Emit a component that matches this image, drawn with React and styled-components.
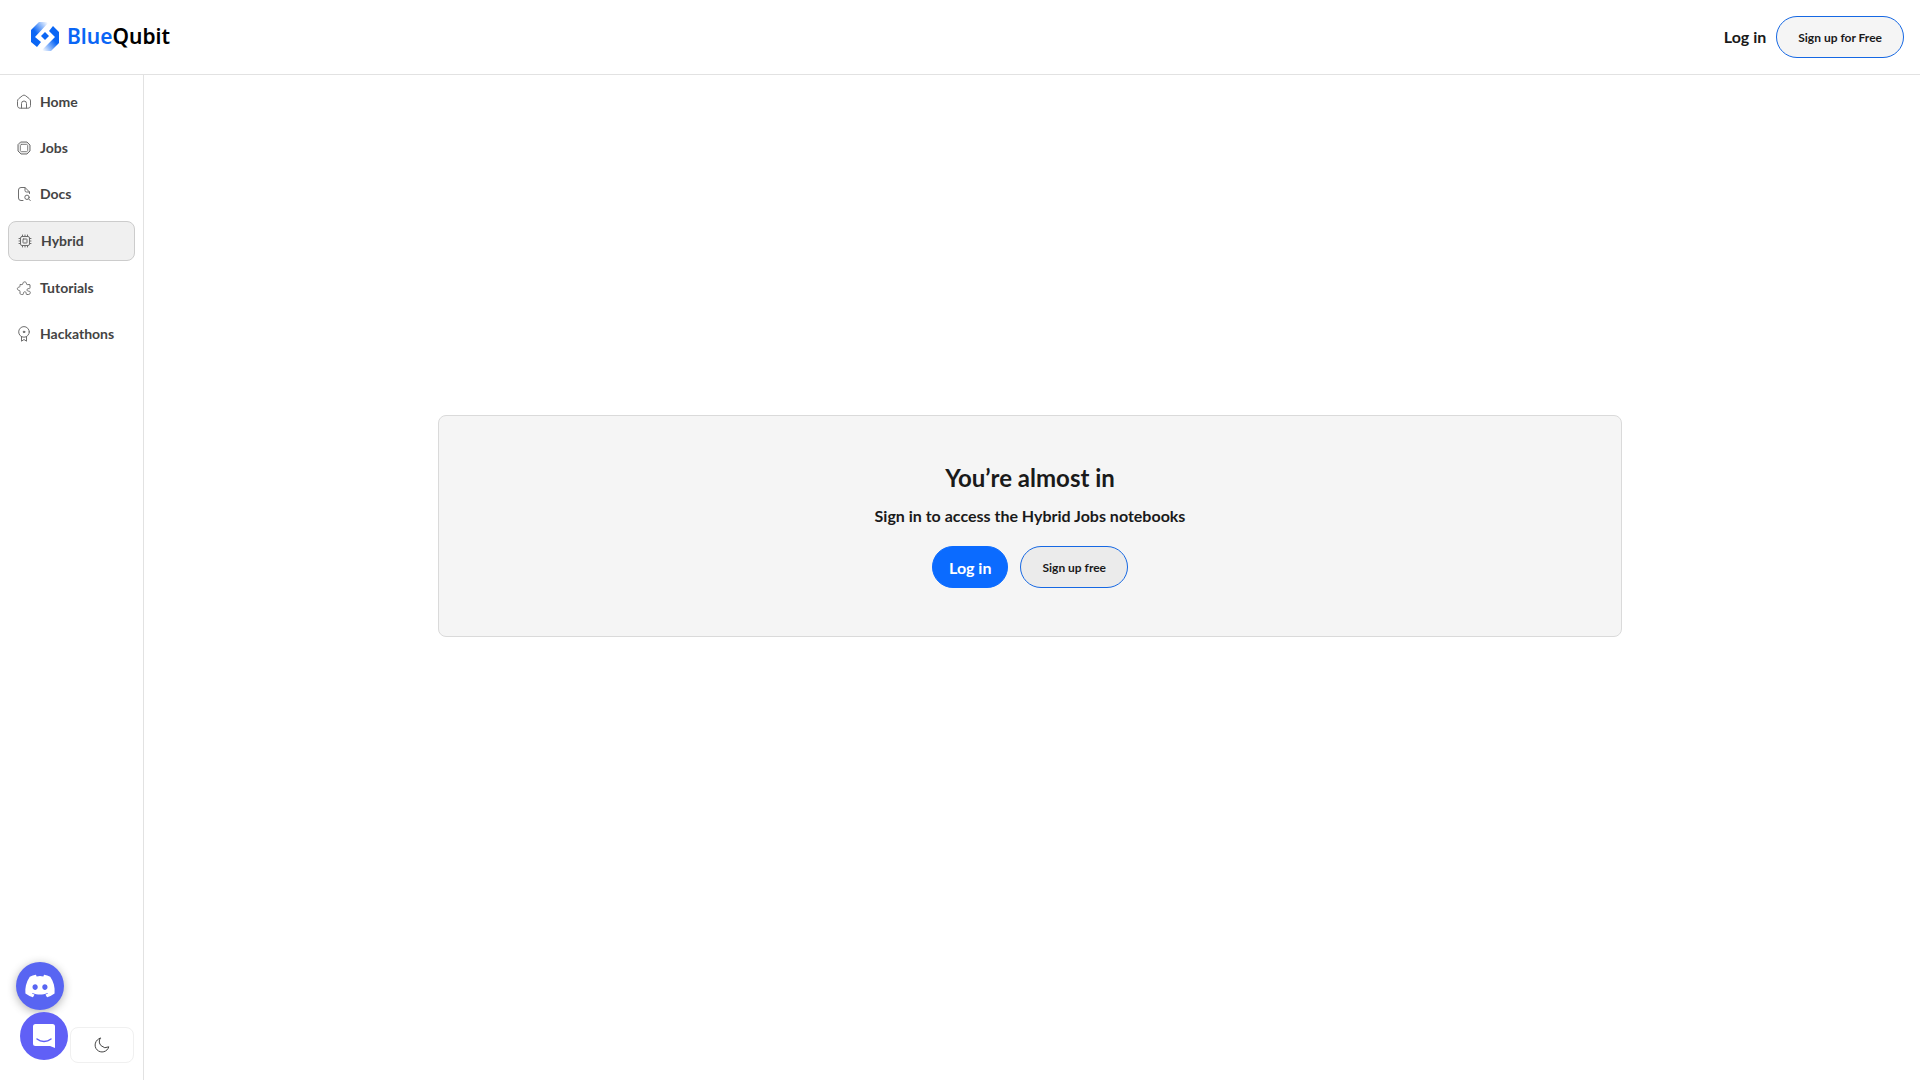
import React, { useState } from "react";
import styled, { createGlobalStyle, css } from "styled-components";
import { FaDiscord } from "react-icons/fa";

const GlobalStyle = createGlobalStyle`
  * {
    box-sizing: border-box;
  }

  body {
    margin: 0;
    background: #ffffff;
    color: #1a1a1a;
    font-family: Lato, "Liberation Sans", sans-serif;
    font-size: 16px;
  }
`;

const Page = styled.div`
  display: flex;
  flex-direction: column;
  min-height: 100vh;
`;

const Header = styled.header`
  display: flex;
  align-items: center;
  justify-content: space-between;
  padding: 16px;
  border-bottom: 1px solid #e2e2e2;
`;

const Brand = styled.a`
  display: flex;
  align-items: center;
  gap: 7px;
  margin-left: 14px;
  color: #000000;
  font-family: "Noto Sans", sans-serif;
  font-size: 21px;
  font-weight: 600;
  line-height: 28px;
  text-decoration: none;
`;

const BrandName = styled.span`
  padding-bottom: 2px;
`;

const BrandAccent = styled.span`
  color: #0a66f5;
`;

const Actions = styled.div`
  display: flex;
  align-items: center;
  gap: ${(props) => props.$gap};
`;

const TextLink = styled.a`
  color: #1a1a1a;
  font-weight: 700;
  line-height: 24px;
  text-decoration: none;
`;

const PillButton = styled.button`
  height: 42px;
  padding: 0 21px;
  border: 1px solid #1668e3;
  border-radius: 21px;
  background: ${(props) => props.$background};
  color: #1a1a1a;
  font-family: inherit;
  font-size: 12px;
  font-weight: 700;
  cursor: pointer;

  ${(props) =>
    props.$primary &&
    css`
      padding: 0 16px;
      border-color: #0b6bff;
      background: #0b6bff;
      color: #ffffff;
      font-size: 16px;
    `}
`;

const Body = styled.div`
  display: flex;
  flex: 1;
`;

const Sidebar = styled.aside`
  display: flex;
  flex-direction: column;
  justify-content: space-between;
  width: 144px;
  padding: 8px;
  border-right: 1px solid #e2e2e2;
`;

const Nav = styled.nav`
  display: flex;
  flex-direction: column;
  gap: 8px;
`;

const NavItem = styled.a`
  display: flex;
  align-items: center;
  gap: 8px;
  padding: 9px 8px;
  border-radius: 8px;
  color: #444444;
  font-size: 14px;
  font-weight: 700;
  line-height: 20px;
  text-decoration: none;

  ${(props) =>
    props.$active &&
    css`
      border: 1px solid #cccccc;
      background: #f0f0f0;
    `}
`;

const Icon = styled.svg`
  width: 16px;
  height: 16px;
  fill: none;
  stroke: ${(props) => props.$color || "#6e6e6e"};
  stroke-width: 1;
  stroke-linecap: round;
  stroke-linejoin: round;
`;

const ThemeButton = styled.button`
  display: flex;
  align-items: center;
  justify-content: center;
  align-self: flex-end;
  width: 64px;
  height: 36px;
  margin: 0 1px 9px 0;
  padding: 0;
  border: 1px solid #f0f0f0;
  border-radius: 8px;
  background: #ffffff;
  cursor: pointer;
`;

const Main = styled.main`
  display: flex;
  flex: 1;
  align-items: center;
  justify-content: center;
  padding: 0 4px 103px 0;
`;

const Card = styled.section`
  display: flex;
  flex-direction: column;
  align-items: center;
  width: 66.8%;
  padding: 48px 24px;
  border: 1px solid #dadada;
  border-radius: 8px;
  background: #f5f5f5;
`;

const Title = styled.h1`
  margin: 0 0 12px;
  font-size: 24px;
  font-weight: 700;
  line-height: 28px;
`;

const Message = styled.p`
  margin: 0 0 18px;
  font-weight: 700;
  line-height: 24px;
`;

const FloatingButtons = styled.div`
  position: fixed;
  bottom: 20px;
  left: 16px;
  display: flex;
  flex-direction: column;
  gap: 2px;
`;

const RoundButton = styled.button`
  display: flex;
  align-items: center;
  justify-content: center;
  width: 48px;
  height: 48px;
  padding: 0;
  border: none;
  border-radius: 50%;
  background: #5865f2;
  box-shadow: 0 2px 10px rgba(0, 0, 0, 0.3);
  color: #ffffff;
  cursor: pointer;
`;

const ChatButton = styled(RoundButton)`
  margin-left: 4px;
  background: #6060f6;
  box-shadow: none;
`;

const navItems = [
  {
    label: "Home",
    icon: (
      <>
        <path d="M1.5 7c0-1 .4-1.7 1.2-2.3l3.6-2.9c1-.8 2.400-.8 3.400 0l3.600 2.900c.8.6 1.200 1.300 1.200 2.300v4.500c0 1.700-1 2.700-2.700 2.700H4.200c-1.700 0-2.700-1-2.700-2.700z" />
        <path d="M5.500 14V9.500a2.500 2.500 0 0 1 5 0V14" />
      </>
    ),
  },
  {
    label: "Jobs",
    icon: (
      <>
        <path
          d="M5 2h6l3 3v6l-3 3H5l-3-3V5z"
          fill="#e4e4e4"
        />
        <rect
          x="4.500"
          y="4.500"
          width="7"
          height="7"
          rx="1"
          fill="#ffffff"
          strokeOpacity="0.700"
        />
      </>
    ),
  },
  {
    label: "Docs",
    icon: (
      <>
        <path d="M7 14.500H5A2.500 2.500 0 0 1 2.500 12V4A2.500 2.500 0 0 1 5 1.500h4L13.500 6v1.500M9 1.500v3A1.500 1.500 0 0 0 10.500 6h3" />
        <circle cx="11" cy="11.300" r="2.200" />
        <path d="M12.700 13l1.600 1.600" />
      </>
    ),
  },
  {
    label: "Hybrid",
    icon: (
      <>
        <rect x="3.500" y="3.500" width="9" height="9" rx="1.500" />
        <rect x="6" y="6" width="4" height="4" rx="0.500" />
        <path d="M5.500 3.500V2M8 3.500V2M10.500 3.500V2M5.500 14v-1.500M8 14v-1.500M10.500 14v-1.500M3.500 5.500H2M3.500 8H2M3.500 10.500H2M14 5.500h-1.500M14 8h-1.500M14 10.500h-1.500" />
      </>
    ),
  },
  {
    label: "Tutorials",
    icon: (
      <path d="M4.500 4.500c1 .2 2.300.3 2.300-.7 0-2.600 3.700-2.600 3.700 0 0 1 1.200.9 2.500.7l1 .3v3c-.2.800-.5 1-1.200.8-2-.5-2.500 2.500-.5 2.500 1.200 0 2 .5 2 1.400 0 1-.6 2-2 2h-1.500c-.5 0-.7-.4-.6-1 .2-2.300-3-2.300-2.800 0 .1.600-.1 1-.6 1H5.500c-1 0-1.500-.6-1.500-1.500v-1.500c0-.8-.3-1-.9-1.100-2.300-.3-2.300-3 0-3.300.6-.1.900-.3.900-1z" />
    ),
  },
  {
    label: "Hackathons",
    icon: (
      <>
        <circle cx="8" cy="5.900" r="5.300" />
        <circle cx="8" cy="5.900" r="0.800" fill="#6e6e6e" />
        <path d="M5.500 10.800v4.400L8 13.500l2.500 1.700v-4.400" />
      </>
    ),
  },
];

const Logo = () => (
  <svg width="30" height="32" viewBox="0 0 30 32" aria-hidden="true">
    <defs>
      <linearGradient id="logoLeft" x1="0" y1="1" x2="0.900" y2="0">
        <stop offset="0.450" stopColor="#0a66f5" />
        <stop offset="1" stopColor="#0a66f5" stopOpacity="0" />
      </linearGradient>
      <linearGradient id="logoRight" x1="1" y1="0" x2="0.100" y2="1">
        <stop offset="0.450" stopColor="#0a66f5" />
        <stop offset="1" stopColor="#0a66f5" stopOpacity="0" />
      </linearGradient>
    </defs>
    <path d="M1 9l8-8h10L5 16l6 5-4 5-6-5z" fill="url(#logoLeft)" />
    <path d="M29 22l-8 8H11l14-14-6-6 4-5 6 6z" fill="url(#logoRight)" />
    <path d="M15 11l4 4-4 4-4-4z" fill="#0a66f5" />
  </svg>
);

const App = () => {
  const [activeItem, setActiveItem] = useState("Hybrid");

  return (
    <Page>
      <GlobalStyle />
      <Header>
        <Brand href="#">
          <Logo />
          <BrandName>
            <BrandAccent>Blue</BrandAccent>Qubit
          </BrandName>
        </Brand>
        <Actions $gap="10px">
          <TextLink href="#login">Log in</TextLink>
          <PillButton type="button" $background="#f5f5f5">
            Sign up for Free
          </PillButton>
        </Actions>
      </Header>
      <Body>
        <Sidebar>
          <Nav>
            {navItems.map((item) => (
              <NavItem
                key={item.label}
                href={`#${item.label.toLowerCase()}`}
                $active={activeItem === item.label}
                onClick={() => setActiveItem(item.label)}
              >
                <Icon viewBox="0 0 16 16" aria-hidden="true">
                  {item.icon}
                </Icon>
                {item.label}
              </NavItem>
            ))}
          </Nav>
          <ThemeButton type="button" aria-label="Toggle dark mode">
            <Icon viewBox="0 0 16 16" $color="#444444" aria-hidden="true">
              <path d="M6.200 1.200a7 7 0 1 0 8.600 8.600A6.300 6.300 0 0 1 6.200 1.200z" />
            </Icon>
          </ThemeButton>
        </Sidebar>
        <Main>
          <Card>
            <Title>You’re almost in</Title>
            <Message>Sign in to access the Hybrid Jobs notebooks</Message>
            <Actions $gap="12px">
              <PillButton type="button" $primary>
                Log in
              </PillButton>
              <PillButton type="button" $background="#ebebeb">
                Sign up free
              </PillButton>
            </Actions>
          </Card>
        </Main>
      </Body>
      <FloatingButtons>
        <RoundButton type="button" aria-label="Join us on Discord">
          <FaDiscord size={32} />
        </RoundButton>
        <ChatButton type="button" aria-label="Open chat">
          <svg width="24" height="26" viewBox="0 0 24 26" aria-hidden="true">
            <path
              d="M3.500 1h17A2.500 2.500 0 0 1 23 3.500V25l-5-2H3.500A2.500 2.500 0 0 1 1 20.500v-17A2.500 2.500 0 0 1 3.500 1z"
              fill="#ffffff"
            />
            <path
              d="M5 16c4 3.300 10 3.300 14 0"
              fill="none"
              stroke="#6060f6"
              strokeWidth="1.500"
              strokeLinecap="round"
            />
          </svg>
        </ChatButton>
      </FloatingButtons>
    </Page>
  );
};

export default App;
